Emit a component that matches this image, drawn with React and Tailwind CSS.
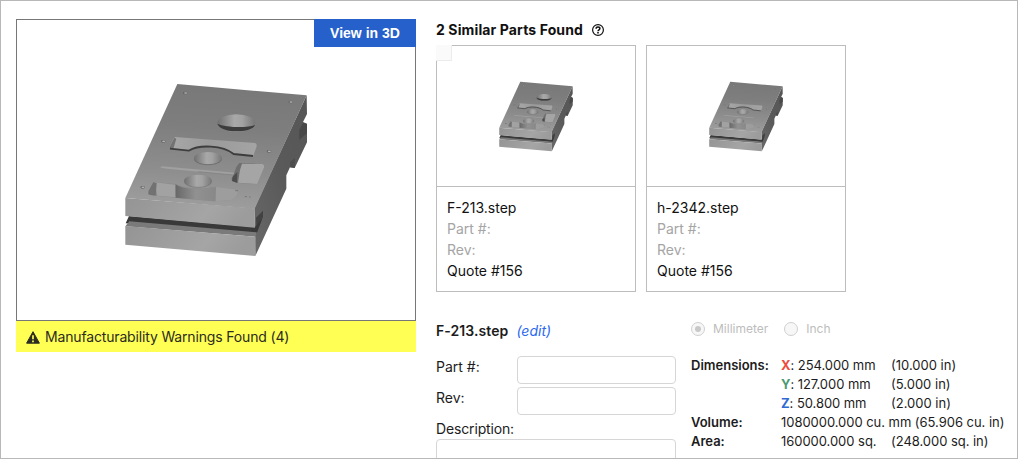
const similarParts = [
    { name: 'F-213.step', quote: 'Quote #156', selectable: true, full: true },
    { name: 'h-2342.step', quote: 'Quote #156', selectable: false, full: false },
];

const PartModel = ({ id, full = true, className }) => (
    <svg viewBox="0 0 630 600" className={className} aria-hidden="true">
        <defs>
            <linearGradient id={`${id}-top`} x1="0.55" y1="0" x2="0.45" y2="1">
                <stop offset="0" stopColor="#787878" />
                <stop offset="0.35" stopColor="#7e7e7e" />
                <stop offset="0.7" stopColor="#8d8d8d" />
                <stop offset="1" stopColor="#9e9e9e" />
            </linearGradient>
            <linearGradient id={`${id}-front`} x1="0" y1="0" x2="1" y2="0.2">
                <stop offset="0" stopColor="#949494" />
                <stop offset="0.7" stopColor="#a5a5a5" />
                <stop offset="1" stopColor="#9c9c9c" />
            </linearGradient>
            <linearGradient id={`${id}-side`} x1="1" y1="0" x2="0" y2="1">
                <stop offset="0" stopColor="#565656" />
                <stop offset="0.5" stopColor="#5a5a5a" />
                <stop offset="1" stopColor="#686868" />
            </linearGradient>
            <linearGradient id={`${id}-hole`} x1="0" y1="0" x2="1" y2="0">
                <stop offset="0" stopColor="#707070" />
                <stop offset="0.45" stopColor="#a8a8a8" />
                <stop offset="0.65" stopColor="#a2a2a2" />
                <stop offset="1" stopColor="#767676" />
            </linearGradient>
            <linearGradient id={`${id}-pocket`} x1="0" y1="0" x2="1" y2="0">
                <stop offset="0" stopColor="#a8a8a8" />
                <stop offset="0.45" stopColor="#9a9a9a" />
                <stop offset="1" stopColor="#a4a4a4" />
            </linearGradient>
            <linearGradient id={`${id}-wall`} x1="0" y1="0" x2="1" y2="0">
                <stop offset="0" stopColor="#686868" />
                <stop offset="0.5" stopColor="#919191" />
                <stop offset="1" stopColor="#888888" />
            </linearGradient>
        </defs>

        {/* Side */}
        <path d="M590 76 L591 132 L579 156 L591 161 L591 217 L554 294 L540 292 L529 316 L529 356 L436 558 L433 415Z" fill={`url(#${id}-side)`} />
        <path d="M579 158 L591 162 L591 190 L568 210 L568 180Z" fill="#484848" />
        <path d="M555 264 L554 294 L540 292 L540 276Z" fill="#4c4c4c" />
        <path d="M438 443 L459 422 L459 440 L440 489Z" fill="#424242" />

        {/* Slot */}
        <path d="M57 438 L435 471 L456 447 L440 490 L47 460Z" fill="#393939" />

        {/* Front */}
        <path d="M46 384 L433 415 L435 473 L46 438Z" fill={`url(#${id}-front)`} />
        <path d="M58 454 L440 487 L437 500 L46 469Z" fill="#7a7a7a" />
        <path d="M46 468 L437 500 L436 558 L46 524Z" fill={`url(#${id}-front)`} />

        {/* Top */}
        <path d="M202 42 L590 76 L434 416 L46 384Z" fill={`url(#${id}-top)`} />

        {full && (
            <g>
                <ellipse cx="379" cy="159" rx="57" ry="26" fill={`url(#${id}-hole)`} />
                <path d="M322 161 C345 172 410 175 435 165 C426 190 333 192 322 161Z" fill="#3c3c3c" />
            </g>
        )}

        {/* Curved pocket */}
        <path d="M195 201 L435 219 Q441 221 440 229 L429 260 L373 253 C338 223 267 222 238 243 L181 237 Q178 231 182 224 L190 207Z" fill={`url(#${id}-pocket)`} />
        <path d="M193 203 L199 206 L190 236 L180 236 Q178 231 182 224Z" fill="#737373" />
        <path d="M180 236 L236 242 C267 223 338 225 371 252 L429 258" fill="none" stroke="#3d3d3d" strokeWidth="5.5" />

        <ellipse cx="294" cy="265" rx="42" ry="19" fill={`url(#${id}-hole)`} />
        <path d="M253 269 C262 289 326 289 335 269" fill="none" stroke="#5e5e5e" strokeWidth="2" />

        {/* Rib */}
        <path d="M155 289 L376 308 L373 315 L177 297 L151 293Z" fill="#a0a0a0" />
        <path d="M265 305 L373 315" stroke="#777777" strokeWidth="1.5" />

        {full && (
            <g>
                <path d="M388 279 L458 282 Q465 285 462 294 L442 342 L380 338 L366 332 Q363 326 368 321 L379 291Z" fill="#6f6f6f" />
                <path d="M396 281 L458 282 Q465 285 462 294 L442 342 L384 338 L390 300Z" fill="#a5a5a5" />
                <path d="M368 320 L382 306 L381 338 L366 333Z" fill="#4d4d4d" />
            </g>
        )}

        {/* Front pocket */}
        <path d="M130 336 L198 342 Q220 353 248 354 Q292 357 304 350 L367 357 Q389 361 382 374 L369 389 L309 394 L195 383 L125 376 Q113 373 116 362Z" fill="#8c8c8c" />
        <path d="M134 337 L195 344 L196 382 L142 377Z" fill="#a2a2a2" />
        <path d="M130 337 L140 339 L137 377 L118 374 Q113 373 116 362Z" fill="#727272" />
        <path d="M197 343 C210 357 292 366 318 350 L317 394 L197 383Z" fill={`url(#${id}-wall)`} />
        <path d="M318 351 L367 357 Q389 361 382 374 L369 389 L317 394Z" fill="#9d9d9d" />
        <ellipse cx="264" cy="333" rx="42" ry="19" fill={`url(#${id}-hole)`} />
        <path d="M223 337 C232 357 296 357 305 337" fill="none" stroke="#6c6c6c" strokeWidth="1.5" />

        {/* Screw holes */}
        {[[226, 69], [542, 96], [160, 214], [477, 244], [98, 352]].map(([x, y]) => (
            <g key={x}>
                <ellipse cx={x} cy={y} rx="7" ry="4" fill="#606060" />
                <ellipse cx={x + 1} cy={y} rx="5" ry="2.5" fill="#b4b4b4" />
            </g>
        ))}
        <path d="M376 362 h8 M404 380 h7 M417 381 h5" stroke="#777777" strokeWidth="3" />
    </svg>
);

const HelpIcon = () => (
    <svg viewBox="0 0 14 14" className="h-3.5 w-3.5" fill="none" stroke="#111" aria-hidden="true">
        <circle cx="7" cy="7" r="5.4" strokeWidth="1.2" />
        <path d="M5.1 5.7 C5.1 3.4 8.9 3.5 8.9 5.6 C8.9 6.8 7 6.9 7 8.2" strokeWidth="1.5" />
        <path d="M7 9.1 V10.6" strokeWidth="1.6" />
    </svg>
);

const SimilarPart = ({ part }) => (
    <div className="relative h-[247px] w-[200px] border border-[#bdbdbd]">
        {part.selectable && (
            <span className="absolute -left-px -top-px h-4 w-4 border-b border-r border-[#ececec] bg-[#fafafa]" />
        )}
        <div className="h-[141px] border-b border-[#bdbdbd] pl-14 pt-[30px]">
            <PartModel id={part.name} full={part.full} className="h-[81px] w-[85px]" />
        </div>
        <div className="px-2.5 pt-2.5 text-sm leading-[21px] text-[#111]">
            <div>{part.name}</div>
            <div className="text-[#a5a5a5]">Part #:</div>
            <div className="text-[#a5a5a5]">Rev:</div>
            <div>{part.quote}</div>
        </div>
    </div>
);

const Radio = ({ label, checked }) => (
    <label className="flex items-center gap-2">
        <span className="flex h-3.5 w-3.5 items-center justify-center rounded-full border border-[#d0d0d0] bg-[#f7f7f7]">
            {checked && <span className="h-1.5 w-1.5 rounded-full bg-[#c8c8c8]" />}
        </span>
        {label}
    </label>
);

const Axis = ({ label, name, color, mm, inches }) => (
    <>
        <b className="font-semibold">{label}</b>
        <span className="tracking-[-0.06px]">
            <b className={`font-bold ${color}`}>{name}</b>: {mm} mm
        </span>
        <span>({inches} in)</span>
    </>
);

export default function App() {
    return (
        <div className="flex h-[459px] w-[1018px] gap-5 overflow-hidden border border-[#b8b8b8] bg-white pl-[15px] pt-[18px] font-['Inter',sans-serif] text-sm text-[#1c1c1c]">
            {/* Preview */}
            <div className="w-[400px] shrink-0">
                <div className="relative h-[302px] border border-[#777] pl-[93px] pt-[50px]">
                    <button className="absolute -right-px -top-px h-7 w-[102px] bg-[#2660cb] font-['Liberation_Sans',sans-serif] text-sm font-bold text-white">
                        View in 3D
                    </button>
                    <PartModel id="main" className="h-[200px] w-[210px]" />
                </div>
                <div className="flex h-[31px] items-center gap-[5px] bg-[#ffff54] pl-2.5 pt-px tracking-[-0.16px] text-[#2c2c22]">
                    <svg viewBox="0 0 14 13" className="h-[13px] w-3.5" aria-hidden="true">
                        <path d="M7 0.7 L13.4 12.2 H0.6Z" fill="#2c2c22" stroke="#2c2c22" strokeWidth="1" strokeLinejoin="round" />
                        <path d="M7 4.2 V8.3 M7 9.4 V11.2" stroke="#ffff54" strokeWidth="1.7" />
                    </svg>
                    Manufacturability Warnings Found (4)
                </div>
            </div>

            <div className="w-[580px] shrink-0">
                <div className="flex h-[26px] items-center gap-2 pb-1 font-bold tracking-[0.12px] text-[#111]">
                    2 Similar Parts Found
                    <HelpIcon />
                </div>
                <div className="flex gap-2.5">
                    {similarParts.map((part) => (
                        <SimilarPart key={part.name} part={part} />
                    ))}
                </div>

                <div className="flex gap-[15px] pt-7">
                    {/* Part form */}
                    <div className="w-[240px] shrink-0">
                        <div className="flex h-[22px] items-center gap-2 font-semibold">
                            <span className="tracking-[0.08px]">F-213.step</span>
                            <a className="font-normal italic text-[#2b6af0]">(edit)</a>
                        </div>
                        <div className="mt-3.5 flex h-[31px] justify-between">
                            <span className="leading-[22px]">Part #:</span>
                            <input className="h-7 w-[159px] rounded border border-[#d6d6d6]" />
                        </div>
                        <div className="flex h-[31px] justify-between">
                            <span className="leading-[22px]">Rev:</span>
                            <input className="h-7 w-[159px] rounded border border-[#d6d6d6]" />
                        </div>
                        <div className="leading-[21px] tracking-[-0.15px]">Description:</div>
                        <textarea className="block h-14 w-full resize-none rounded border border-[#d6d6d6]" />
                    </div>

                    {/* Measurements */}
                    <div className="w-[325px] shrink-0 text-[13px]">
                        <div className="flex h-[18px] items-center gap-4 text-xs text-[#bdbdbd]">
                            <Radio label="Millimeter" checked />
                            <Radio label="Inch" />
                        </div>
                        <div className="mt-[18px] grid grid-cols-[90px_110px_1fr] whitespace-nowrap leading-[19px]">
                            <Axis label="Dimensions:" name="X" color="text-[#ee4b3d]" mm="254.000" inches="10.000" />
                            <Axis name="Y" color="text-[#4c9a70]" mm="127.000" inches="5.000" />
                            <Axis name="Z" color="text-[#2f69d2]" mm="50.800" inches="2.000" />
                            <b className="font-semibold">Volume:</b>
                            <span className="col-span-2 tracking-[-0.04px]">1080000.000 cu. mm (65.906 cu. in)</span>
                            <b className="font-semibold">Area:</b>
                            <span className="tracking-[-0.04px]">160000.000 sq.</span>
                            <span className="tracking-[-0.04px]">(248.000 sq. in)</span>
                        </div>
                    </div>
                </div>
            </div>
        </div>
    );
}
